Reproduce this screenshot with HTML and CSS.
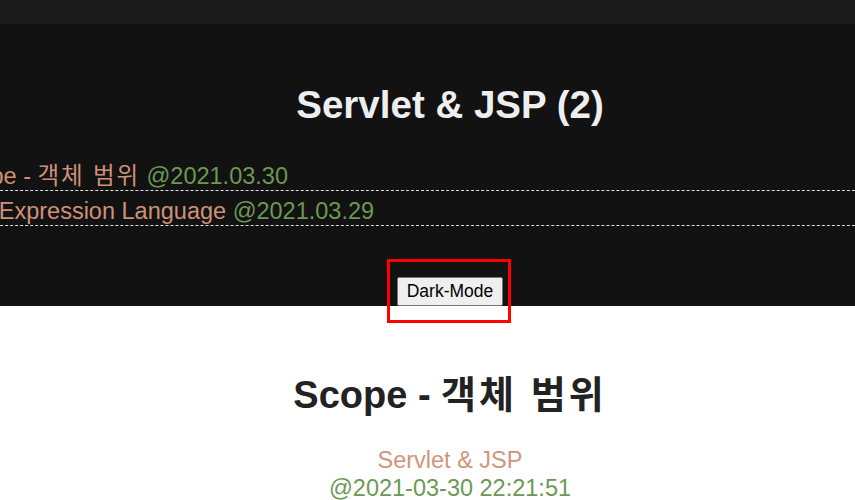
FILE: index.html
```html
<!DOCTYPE html>
<html lang="ko">

<head>
  <meta charset="UTF-8">
  <meta name="viewport" content="width=device-width, initial-scale=1.0">
  <title>Scope - 객체 범위</title>
  <link rel="stylesheet" href="styles.css">
</head>

<body>

  <div class="page">

    <div class="topbar"></div>

    <div class="series">
      <h2 class="series-title">Servlet &amp; JSP (2)</h2>

      <ul class="post-list">
        <li><span class="post-name">Scope - <span class="ko">객체 범위</span></span> <span class="post-date">@2021.03.30</span></li>
        <li><span class="post-name">EL - Expression Language</span> <span class="post-date">@2021.03.29</span></li>
      </ul>

      <div class="mode-wrap">
        <button class="mode-btn">Dark-Mode</button>
        <div class="highlight"></div>
      </div>
    </div>

    <div class="post">
      <h1 class="post-title">Scope - <span class="ko">객체 범위</span></h1>
      <div class="post-category">Servlet &amp; JSP</div>
      <div class="post-time">@2021-03-30 22:21:51</div>
    </div>

  </div>

</body>

</html>
```

FILE: styles.css
```css
body {
  margin: 0;
  overflow: hidden;
  background-color: #fff;
  font-family: 'Liberation Sans', Arial, 'Noto Sans CJK KR', sans-serif;
}

.page {
  width: 900px;
}

.topbar {
  height: 24px;
  background-color: #1a1a1a;
}

.series {
  background-color: #121212;
  height: 282px;
  box-sizing: border-box;
  padding-top: 59px;
  text-align: center;
}

.series-title {
  color: #eee;
  font-size: 38.5px;
  line-height: 44px;
  font-weight: bold;
  margin: 0;
}

.ko {
  letter-spacing: 0.08em;
}

.post-list {
  list-style: none;
  margin: 29px 0 0 -50px;
  padding: 0;
  text-align: left;
}

.post-list li {
  font-size: 23.5px;
  line-height: 28px;
  height: 28px;
  padding-top: 6px;
  border-bottom: 1px dashed #ddd;
}

.post-name {
  color: #ce9178;
}

.post-date {
  color: #6a9955;
}

.mode-wrap {
  position: relative;
  display: inline-block;
  margin-top: 51px;
}

.mode-btn {
  display: block;
  font-family: 'Liberation Sans', Arial, sans-serif;
  font-size: 17.5px;
  height: 29px;
  padding: 0 9px;
  color: #000;
  background-color: #efefef;
  border: 1px solid #767676;
  border-radius: 2px;
}

.highlight {
  position: absolute;
  top: -18px;
  left: -10px;
  right: -8px;
  bottom: -17px;
  border: 3px solid #f00;
}

.post {
  text-align: center;
}

.post-title {
  color: #222;
  font-size: 38px;
  line-height: 44px;
  margin: 67px 0 29px;
}

.post-category,
.post-time {
  font-size: 23.5px;
  line-height: 28px;
}

.post-category {
  color: #d0957c;
}

.post-time {
  color: #6a9955;
}
```
